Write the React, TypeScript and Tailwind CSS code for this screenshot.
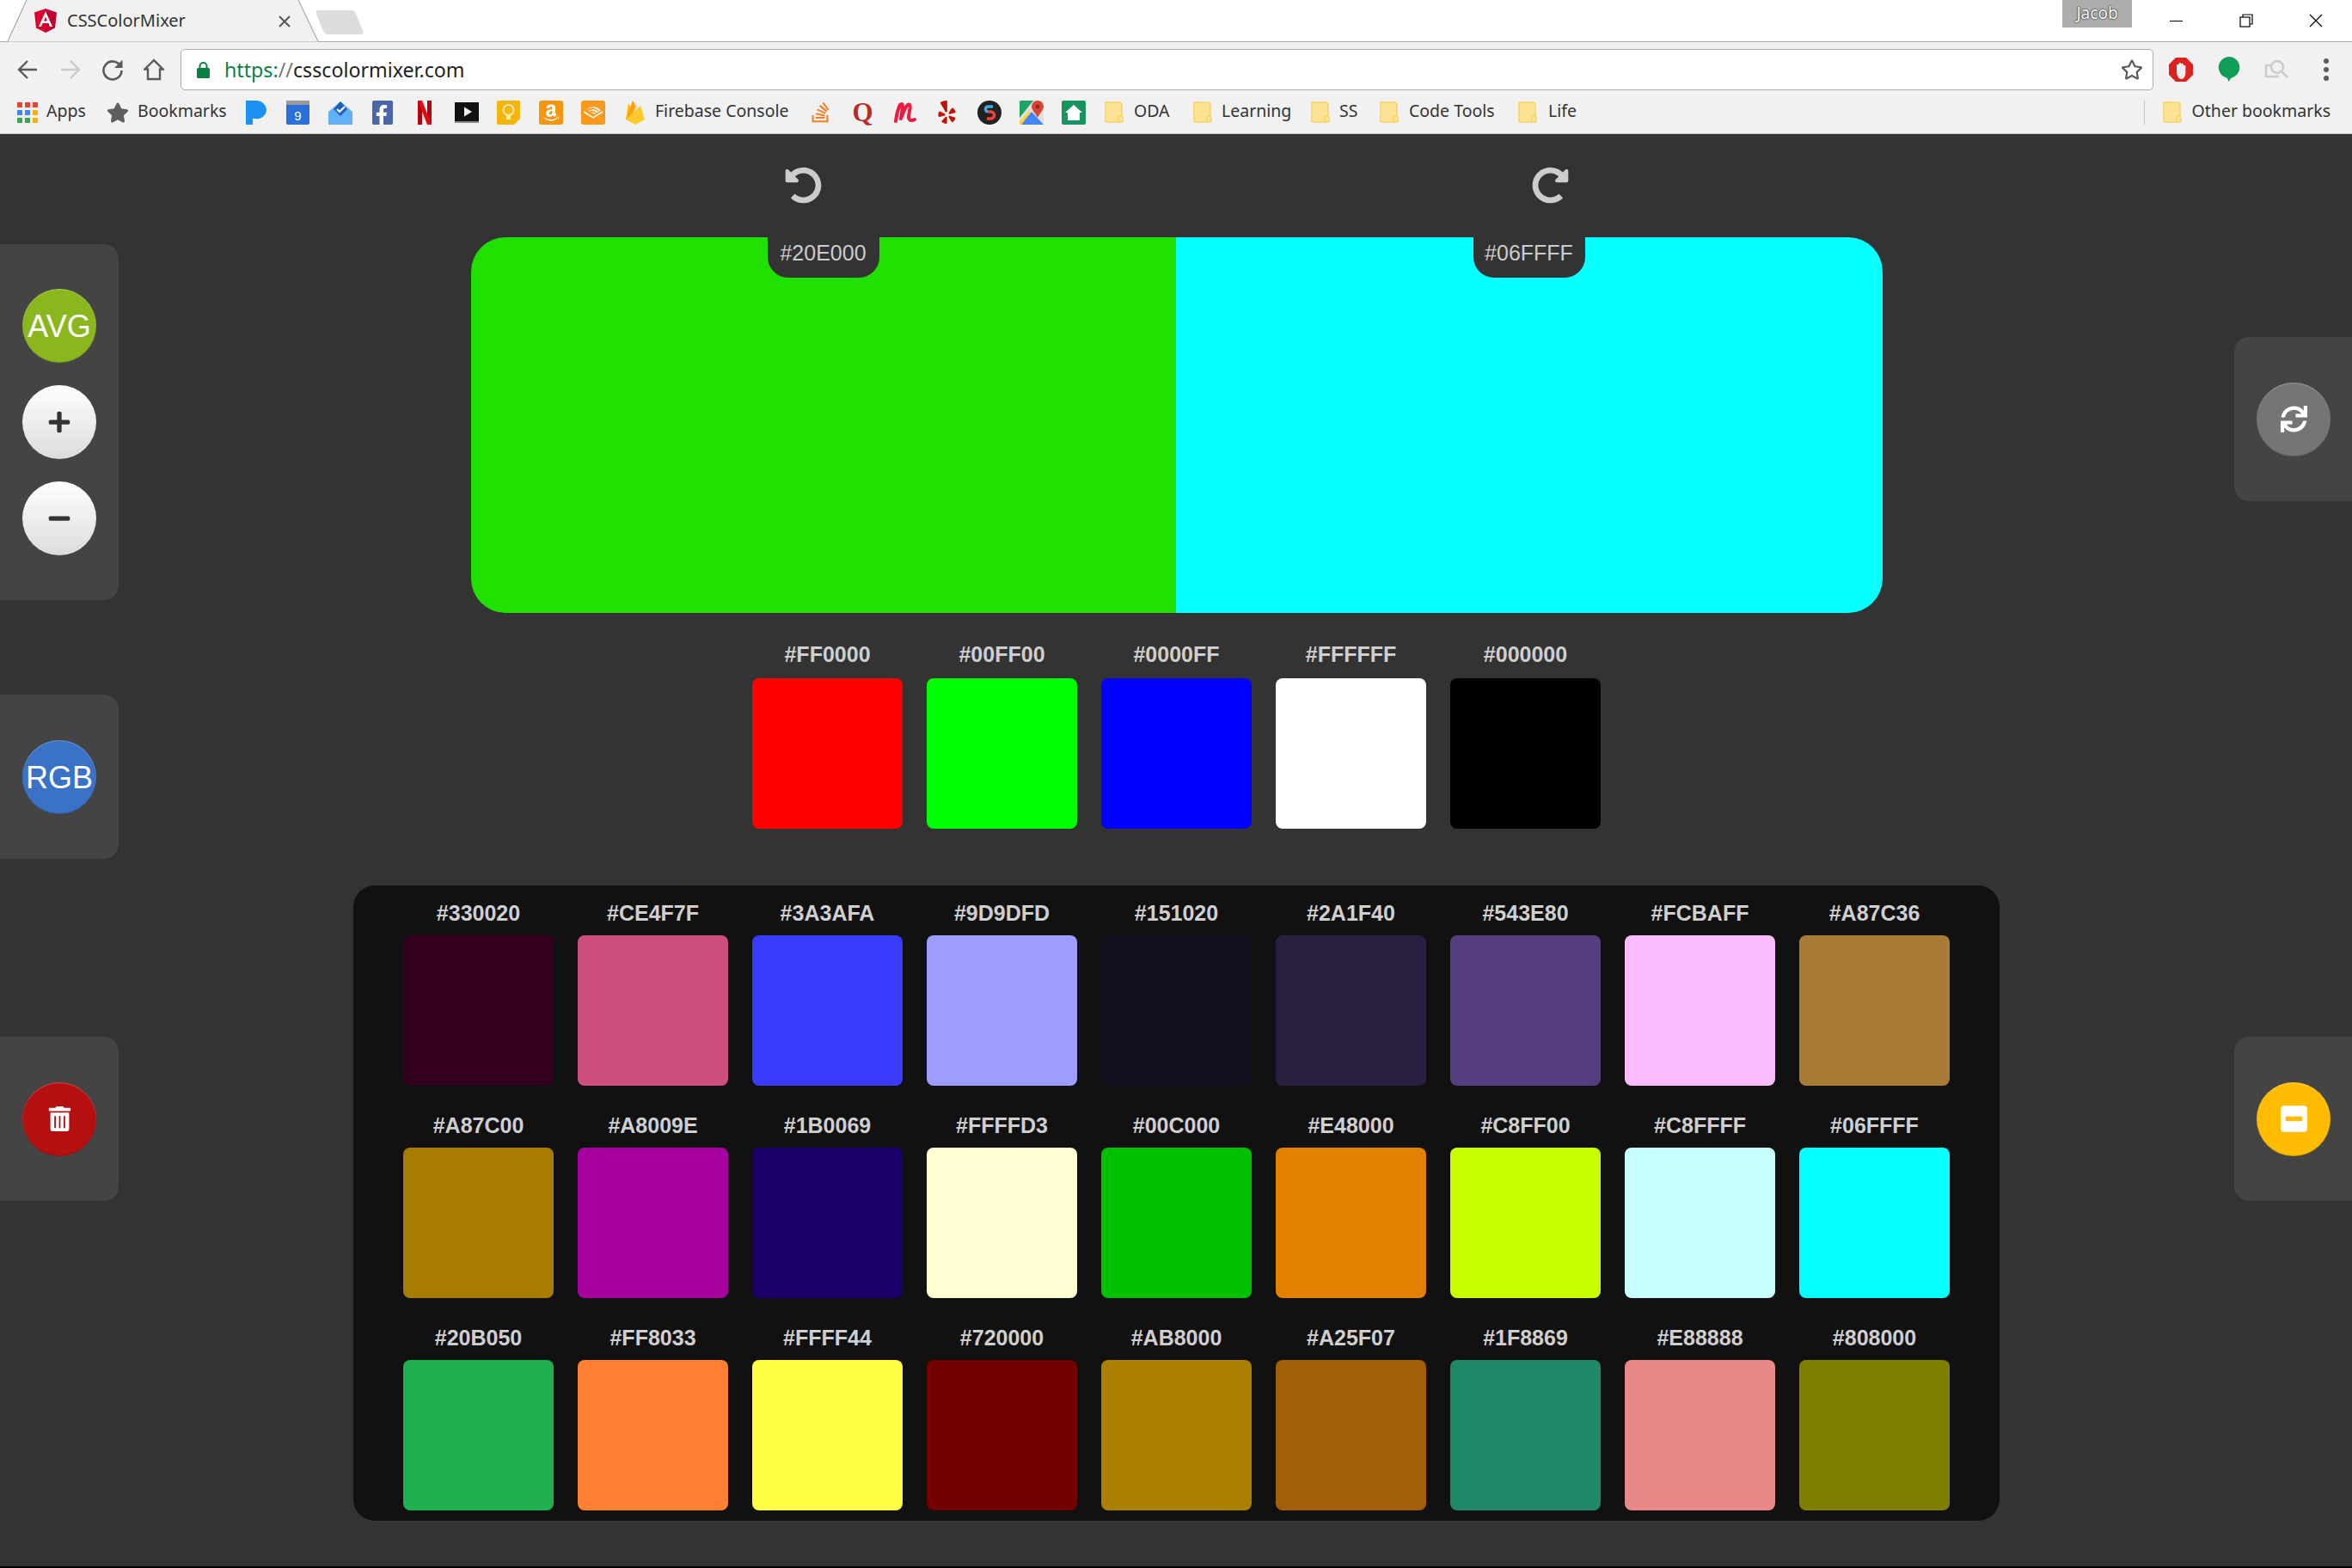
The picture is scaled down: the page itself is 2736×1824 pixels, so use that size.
import React from "react";
import { FaUndoAlt, FaRedoAlt, FaPlus, FaMinus, FaTrashAlt, FaSync, FaMinusSquare, FaYelp, FaStackOverflow, FaFacebookF, FaAmazon, FaStar, FaRegStar } from "react-icons/fa";
import { SiAudible } from "react-icons/si";

const ui = "font-['Noto_Sans','Open_Sans',sans-serif]";
const app = "font-['Liberation_Sans',Arial,sans-serif]";

const presets = [
  ["#FF0000", "bg-[#ff0000]"],
  ["#00FF00", "bg-[#00ff00]"],
  ["#0000FF", "bg-[#0000ff]"],
  ["#FFFFFF", "bg-[#ffffff]"],
  ["#000000", "bg-[#000000]"],
];

const palette = [
  ["#330020", "bg-[#330020]"],
  ["#CE4F7F", "bg-[#ce4f7f]"],
  ["#3A3AFA", "bg-[#3a3afa]"],
  ["#9D9DFD", "bg-[#9d9dfd]"],
  ["#151020", "bg-[#151020]"],
  ["#2A1F40", "bg-[#2a1f40]"],
  ["#543E80", "bg-[#543e80]"],
  ["#FCBAFF", "bg-[#fcbaff]"],
  ["#A87C36", "bg-[#a87c36]"],
  ["#A87C00", "bg-[#a87c00]"],
  ["#A8009E", "bg-[#a8009e]"],
  ["#1B0069", "bg-[#1b0069]"],
  ["#FFFFD3", "bg-[#ffffd3]"],
  ["#00C000", "bg-[#00c000]"],
  ["#E48000", "bg-[#e48000]"],
  ["#C8FF00", "bg-[#c8ff00]"],
  ["#C8FFFF", "bg-[#c8ffff]"],
  ["#06FFFF", "bg-[#06ffff]"],
  ["#20B050", "bg-[#20b050]"],
  ["#FF8033", "bg-[#ff8033]"],
  ["#FFFF44", "bg-[#ffff44]"],
  ["#720000", "bg-[#720000]"],
  ["#AB8000", "bg-[#ab8000]"],
  ["#A25F07", "bg-[#a25f07]"],
  ["#1F8869", "bg-[#1f8869]"],
  ["#E88888", "bg-[#e88888]"],
  ["#808000", "bg-[#808000]"],
];

function Swatch({ label, color, labelGap }: { label: string; color: string; labelGap: string }) {
  return (
    <div className="flex flex-col items-center w-[175px]">
      <div className={`h-[28px] leading-[28px] text-[25px] font-bold text-[#cfcfcf] ${labelGap}`}>{label}</div>
      <div className={`w-[175px] h-[175px] rounded-[8px] ${color}`} />
    </div>
  );
}

function RoundButton({ className, children }: { className: string; children?: React.ReactNode }) {
  return (
    <div className={`w-[86px] h-[86px] shrink-0 rounded-full flex items-center justify-center ${className}`}>
      {children}
    </div>
  );
}

const flat = "shadow-[inset_0_1px_1px_rgba(255,255,255,0.25),inset_0_-1px_1px_rgba(0,0,0,0.15)]";

function Slot({ children }: { children: React.ReactNode }) {
  return <div className="w-[49px] h-[28px] shrink-0 flex items-center justify-center">{children}</div>;
}

function Folder() {
  return (
    <svg width="22" height="25" viewBox="0 0 22 25" className="shrink-0">
      <path d="M1 1h16q3 0 3 3v19q0 1-1 1H2q-1 0-1-1z" fill="#fde293" stroke="#f5d469" strokeWidth="1.5" />
      <rect x="16" y="17" width="5" height="7" rx="1" fill="#fde293" stroke="#f5d469" strokeWidth="1.5" />
    </svg>
  );
}

function BookmarkLabel({ children, className = "" }: { children: React.ReactNode; className?: string }) {
  return <span className={`text-[19.5px] leading-[28px] pb-[3px] text-[#333] whitespace-nowrap ${className}`}>{children}</span>;
}

const appsDots = [
  "bg-[#ea4335]", "bg-[#ea4335]", "bg-[#ea4335]",
  "bg-[#4285f4]", "bg-[#4285f4]", "bg-[#fbac05]",
  "bg-[#34a853]", "bg-[#34a853]", "bg-[#fbac05]",
];

function TabStrip() {
  return (
    <div className={`relative h-[49px] shrink-0 bg-white border-b border-[#a9a9a9] flex items-start ${ui}`}>
      <svg width="372" height="49" viewBox="0 0 372 49" className="absolute left-0 top-0">
        <path d="M9 48.5 L31 0 H347 L370 48.5 Z" fill="#f1f1f1" />
        <path d="M9 48 L31 0 M347 0 L370 48" stroke="#a9a9a9" strokeWidth="1.2" fill="none" />
      </svg>
      <div className="relative flex items-center h-[48px] pl-[40px] w-[366px]">
        <svg width="26" height="28" viewBox="0 0 26 28" className="shrink-0">
          <path d="M13 0 0 4.6 2 22.6 13 28z" fill="#dd0031" />
          <path d="M13 0 26 4.6 24 22.6 13 28z" fill="#c3002f" />
          <path d="M13 3.2 5 21h3l1.6-4h6.8l1.6 4h3zM11 14.4 13 9.6l2 4.8z" fill="#fff" />
        </svg>
        <span className="ml-[12px] text-[20px] leading-[28px] text-[#333] whitespace-nowrap">CSSColorMixer</span>
        <svg width="14" height="14" viewBox="0 0 14 14" className="absolute left-[324px] top-[18px]">
          <path d="M1 1 13 13M13 1 1 13" stroke="#555" strokeWidth="2" />
        </svg>
      </div>
      <div className="relative w-[46px] h-[28px] mt-[12px] ml-[6px] bg-[#dcdcdc] rounded-[4px] skew-x-[22deg]" />
      <div className="ml-auto flex items-start pr-[2px]">
        <div className="w-[81px] h-[32px] mr-[11px] pb-[2px] bg-[#adadad] flex items-center justify-center text-[19px] text-white [text-shadow:0_0_2px_#111,0_0_1px_#111]">
          Jacob
        </div>
        <div className="w-[81px] h-[48px] flex items-center justify-center">
          <div className="w-[15px] h-px bg-black" />
        </div>
        <div className="w-[81px] h-[48px] flex items-center justify-center">
          <svg width="16" height="16" viewBox="0 0 16 16" fill="none" stroke="#000" strokeWidth="1.2">
            <rect x="1" y="4" width="11" height="11" fill="#fff" />
            <path d="M4 4V1h11v11h-3" />
          </svg>
        </div>
        <div className="w-[81px] h-[48px] flex items-center justify-center">
          <svg width="16" height="16" viewBox="0 0 16 16" stroke="#000" strokeWidth="1.2">
            <path d="M1 1 15 15M15 1 1 15" />
          </svg>
        </div>
      </div>
    </div>
  );
}

function Toolbar() {
  return (
    <div className={`h-[57px] shrink-0 bg-[#f1f1f1] flex items-center pt-[7px] ${ui}`}>
      <div className="w-[210px] shrink-0 relative flex items-center pl-[20px] h-full">
        <svg width="24" height="24" viewBox="0 0 24 24" fill="none" stroke="#5a5a5a" strokeWidth="2.4" className="shrink-0">
          <path d="M23 12H3M12 2 2 12l10 10" />
        </svg>
        <svg width="24" height="24" viewBox="0 0 24 24" fill="none" stroke="#c9c9c9" strokeWidth="2.4" className="shrink-0 ml-[26px]">
          <path d="M1 12h20M12 2l10 10-10 10" />
        </svg>
        <svg width="26" height="26" viewBox="0 0 26 26" fill="none" stroke="#5a5a5a" strokeWidth="2.6" className="shrink-0 ml-[24px]">
          <path d="M22 8.5A10.5 10.5 0 1 0 23.5 14" />
          <path d="M24.5 1.5v9.5H15z" fill="#5a5a5a" stroke="none" />
        </svg>
        <svg width="24" height="26" viewBox="0 0 24 26" fill="none" stroke="#5a5a5a" strokeWidth="2.4" className="shrink-0 ml-[23px]">
          <path d="M12 2 1.5 12.5H5V24h14V12.5h3.5z" />
        </svg>
      </div>
      <div className="w-[2295px] h-[48px] shrink-0 bg-white border border-[#adadad] rounded-[5px] flex items-center pl-[18px] pr-[11px]">
        <svg width="15" height="19" viewBox="0 0 15 19" className="shrink-0">
          <rect x="0" y="7" width="15" height="12" rx="1.5" fill="#0b8043" />
          <path d="M3.5 8V5a4 4 0 0 1 8 0v3" fill="none" stroke="#0b8043" strokeWidth="2" />
        </svg>
        <span className="ml-[17px] text-[23.2px] leading-[32px] whitespace-nowrap text-[#222]">
          <span className="text-[#0b8043]">https:</span>
          <span className="text-[#777]">//</span>csscolormixer.com
        </span>
        <FaRegStar className="ml-auto shrink-0 text-[#5a5a5a] text-[26px]" />
      </div>
      <div className="flex-1 relative flex items-center h-full">
        <svg width="28" height="28" viewBox="0 0 28 28" className="shrink-0 ml-[18px]">
          <path d="M8 0h12l8 8v12l-8 8H8l-8-8V8z" fill="#e0201e" />
          <path d="M9 18V9a1.3 1.3 0 0 1 2.6 0V7a1.3 1.3 0 0 1 2.6 0v1a1.3 1.3 0 0 1 2.6 0v2a1.3 1.3 0 0 1 2.6 0v8c0 4-2.5 7-5.2 7S10 22 9 18z" fill="#eee" />
        </svg>
        <svg width="26" height="30" viewBox="0 0 26 30" className="shrink-0 ml-[29px]">
          <path d="M13 0a12.5 12.5 0 0 1 2.5 24.7L12.5 29 11 24.8A12.5 12.5 0 0 1 13 0z" fill="#0f9d58" />
        </svg>
        <svg width="28" height="24" viewBox="0 0 28 24" fill="none" stroke="#cbcbcb" strokeWidth="2.6" className="shrink-0 ml-[28px]">
          <circle cx="15" cy="9" r="7" />
          <path d="m20 14 7 7M8 7H2v13h15" />
        </svg>
        <div className="flex flex-col gap-[4px] ml-[41px]">
          <div className="w-[6px] h-[6px] rounded-full bg-[#5a5a5a]" />
          <div className="w-[6px] h-[6px] rounded-full bg-[#5a5a5a]" />
          <div className="w-[6px] h-[6px] rounded-full bg-[#5a5a5a]" />
        </div>
      </div>
    </div>
  );
}

function BookmarksBar() {
  return (
    <div className={`h-[50px] shrink-0 bg-[#f1f1f1] border-b border-[#c4c4c4] flex items-center pl-[20px] ${ui}`}>
      <div className="grid grid-cols-3 gap-[3px] w-[24px] shrink-0">
        {appsDots.map((c, i) => (
          <div key={i} className={`w-[6px] h-[6px] ${c}`} />
        ))}
      </div>
      <BookmarkLabel className="ml-[10px] w-[70px]">Apps</BookmarkLabel>
      <FaStar className="shrink-0 text-[#5f5f5f] text-[26px]" />
      <BookmarkLabel className="ml-[10px] w-[113px]">Bookmarks</BookmarkLabel>
      <Slot>
        <svg width="24" height="28" viewBox="0 0 24 28">
          <path d="M0 0h11a12 12 0 0 1 13 11 11 11 0 0 1-13 10H8v7H0z" fill="#1c92f2" />
        </svg>
      </Slot>
      <Slot>
        <svg width="27" height="28" viewBox="0 0 27 28">
          <rect y="3" width="27" height="25" rx="2" fill="#2a6fdb" />
          <rect width="27" height="5" rx="1" fill="#9a9a9a" />
          <text x="13.5" y="23" textAnchor="middle" fontSize="15" fill="#fff" fontFamily="Liberation Sans">9</text>
        </svg>
      </Slot>
      <Slot>
        <svg width="28" height="28" viewBox="0 0 28 28">
          <path d="M0 13 14 1l14 12v15H0z" fill="#62b0f5" />
          <path d="M6 10 14 1l8 9-8 8z" fill="#1e5fc4" />
          <path d="m10 10 3 3 6-6" fill="none" stroke="#fff" strokeWidth="2.2" />
          <path d="m0 13 14 9 14-9v15H0z" fill="#62b0f5" />
        </svg>
      </Slot>
      <Slot>
        <div className="w-[24px] h-[28px] rounded-[2px] bg-[#4a66a8] flex items-end justify-end overflow-hidden pr-[2px]">
          <FaFacebookF className="text-white text-[23px]" />
        </div>
      </Slot>
      <Slot>
        <svg width="16" height="28" viewBox="0 0 16 28">
          <path d="M0 0h5v28l-5 0z" fill="#b1060f" />
          <path d="M11 0h5v28h-5z" fill="#b1060f" />
          <path d="M0 0h5l11 28h-5z" fill="#e50914" />
        </svg>
      </Slot>
      <Slot>
        <svg width="28" height="24" viewBox="0 0 28 24">
          <rect width="28" height="22" fill="#111" />
          <rect y="22" width="28" height="2" fill="#888" />
          <path d="M11 5.5 20 11l-9 5.5z" fill="#eee" />
        </svg>
      </Slot>
      <Slot>
        <svg width="27" height="28" viewBox="0 0 27 28">
          <path d="M2 0h25v21l-7 7H2a2 2 0 0 1-2-2V2a2 2 0 0 1 2-2z" fill="#f5b50f" />
          <circle cx="13.5" cy="11" r="6" fill="none" stroke="#fde9a8" strokeWidth="2" />
          <rect x="11" y="17" width="5" height="5" fill="#fde9a8" />
        </svg>
      </Slot>
      <Slot>
        <div className="w-[28px] h-[28px] rounded-[3px] bg-[#f6960e] flex items-center justify-center">
          <FaAmazon className="text-white text-[22px]" />
        </div>
      </Slot>
      <Slot>
        <div className="w-[28px] h-[28px] rounded-[3px] bg-[#f8991c] flex items-center justify-center">
          <SiAudible className="text-white text-[22px]" />
        </div>
      </Slot>
      <Slot>
        <svg width="22" height="28" viewBox="0 0 22 28">
          <path d="M0 22 3 3l5 9z" fill="#ffc107" />
          <path d="M0 22 8 0l4 7-8 15z" fill="#ffa000" />
          <path d="M0 22 17 6l5 16-11 6z" fill="#ffca28" />
        </svg>
      </Slot>
      <BookmarkLabel className="w-[168px] ml-[-1px]">Firebase Console</BookmarkLabel>
      <Slot>
        <FaStackOverflow className="text-[#f48024] text-[27px]" />
      </Slot>
      <Slot>
        <span className="font-['Liberation_Serif',serif] font-bold text-[31px] leading-[28px] text-[#b92b27]">Q</span>
      </Slot>
      <Slot>
        <svg width="28" height="26" viewBox="0 0 28 26" fill="none" stroke="#ed1c40" strokeWidth="4" strokeLinecap="round" strokeLinejoin="round">
          <path d="M3 23C4 15 6 8 8 4c2-2 3-1 3 2L9 20c3-8 5-14 8-16 2-1 3 0 2.500 4L18 17c-.5 5 3 6 7 4" />
        </svg>
      </Slot>
      <Slot>
        <FaYelp className="text-[#c41200] text-[27px]" />
      </Slot>
      <Slot>
        <svg width="28" height="28" viewBox="0 0 28 28">
          <circle cx="14" cy="14" r="14" fill="#222" />
          <path d="M18 7h-5a3 3 0 0 0-1 6" fill="none" stroke="#44a8e0" strokeWidth="3.5" />
          <path d="M11 21h4a4 4 0 0 0 1-8h-4" fill="none" stroke="#ef4136" strokeWidth="3.5" />
        </svg>
      </Slot>
      <Slot>
        <svg width="28" height="28" viewBox="0 0 28 28">
          <rect width="28" height="28" rx="2" fill="#e0e0e0" />
          <path d="M0 28V2q0-2 2-2h14L0 20z" fill="#1da462" />
          <path d="M0 28 14 13l14 15z" fill="#4285f4" />
          <path d="M0 24 11 12l2 2L2 28H0z" fill="#ffd43c" />
          <path d="M21 0a7 7 0 0 1 7 7c0 4-5 8-7 13-2-5-7-9-7-13a7 7 0 0 1 7-7z" fill="#db4437" />
          <circle cx="21" cy="7" r="2.5" fill="#8e2a20" />
        </svg>
      </Slot>
      <Slot>
        <svg width="28" height="28" viewBox="0 0 28 28">
          <rect width="28" height="28" rx="2" fill="#16955f" />
          <path d="M14 5 4 14h3v9h14v-9h3z" fill="#fff" />
        </svg>
      </Slot>
      <div className="ml-[12px] flex items-center">
        <Folder />
      </div>
      <BookmarkLabel className="ml-[12px] w-[69px]">ODA</BookmarkLabel>
      <Folder />
      <BookmarkLabel className="ml-[11px] w-[104px]">Learning</BookmarkLabel>
      <Folder />
      <BookmarkLabel className="ml-[11px] w-[47px]">SS</BookmarkLabel>
      <Folder />
      <BookmarkLabel className="ml-[12px] w-[127px]">Code Tools</BookmarkLabel>
      <Folder />
      <BookmarkLabel className="ml-[13px]">Life</BookmarkLabel>
      <div className="ml-auto flex items-center pr-[25px]">
        <div className="w-px h-[28px] bg-[#c4c4c4] mr-[21px]" />
        <Folder />
        <BookmarkLabel className="ml-[12px]">Other bookmarks</BookmarkLabel>
      </div>
    </div>
  );
}

export default function App() {
  return (
    <div className={`w-[2736px] h-[1824px] flex flex-col bg-[#333333] overflow-hidden ${app}`}>
      <TabStrip />
      <Toolbar />
      <BookmarksBar />

      <div className="flex-1 flex min-h-0">
        <div className="w-[138px] shrink-0 pt-[128px] flex flex-col">
          <div className="h-[414px] bg-[#444444] rounded-r-[17px] flex flex-col gap-[26px] justify-center pl-[26px]">
            <RoundButton className={`bg-[#8ab71e] ${flat} text-white text-[36px] pt-[2px]`}>AVG</RoundButton>
            <RoundButton className="bg-gradient-to-b from-white to-[#dcdcdc]">
              <FaPlus className="text-[#333] text-[28px]" />
            </RoundButton>
            <RoundButton className="bg-gradient-to-b from-white to-[#dcdcdc]">
              <FaMinus className="text-[#333] text-[28px]" />
            </RoundButton>
          </div>
          <div className="h-[191px] mt-[110px] bg-[#444444] rounded-r-[17px] flex items-center pl-[26px]">
            <RoundButton className={`bg-[#3a72c7] ${flat} text-white text-[36px] pt-[2px]`}>RGB</RoundButton>
          </div>
          <div className="h-[191px] mt-[207px] bg-[#444444] rounded-r-[17px] flex items-center pl-[26px]">
            <RoundButton className={`bg-[#b51010] ${flat}`}>
              <FaTrashAlt className="text-white text-[29px]" />
            </RoundButton>
          </div>
        </div>

        <div className="flex-1 min-w-0 flex flex-col items-center pt-[38px]">
          <div className="w-[1640px] flex justify-between px-[364px] h-[82px] items-start">
            <FaUndoAlt className="text-[#cccccc] text-[43px]" />
            <FaRedoAlt className="text-[#cccccc] text-[43px]" />
          </div>
          <div className="w-[1642px] h-[437px] rounded-[40px] overflow-hidden flex">
            <div className="w-[820px] shrink-0 bg-[#20e000] flex justify-center">
              <div className="w-[130px] h-[47px] pb-[10px] bg-[#333333] rounded-b-[24px] flex items-center justify-center text-[25px] text-[#cccccc]">#20E000</div>
            </div>
            <div className="flex-1 bg-[#06ffff] flex justify-center">
              <div className="w-[130px] h-[47px] pb-[10px] bg-[#333333] rounded-b-[24px] flex items-center justify-center text-[25px] text-[#cccccc]">#06FFFF</div>
            </div>
          </div>
          <div className="mt-[34px] flex gap-[28px]">
            {presets.map(([l, c]) => (
              <Swatch key={l} label={l} color={c} labelGap="mb-[14px]" />
            ))}
          </div>
          <div className="mt-[66px] w-[1915px] bg-[#111111] rounded-[25px] pt-[18px] pb-[12px] px-[58px] grid grid-cols-9 gap-x-[28px] gap-y-[32px]">
            {palette.map(([l, c]) => (
              <Swatch key={l} label={l} color={c} labelGap="mb-[12px]" />
            ))}
          </div>
        </div>

        <div className="w-[137px] shrink-0 pt-[236px] flex flex-col">
          <div className="h-[191px] bg-[#444444] rounded-l-[17px] flex items-center pl-[26px]">
            <RoundButton className={`bg-[#757575] ${flat}`}>
              <FaSync className="text-white text-[31px]" />
            </RoundButton>
          </div>
          <div className="h-[191px] mt-[623px] bg-[#444444] rounded-l-[17px] flex items-center pl-[26px]">
            <RoundButton className={`bg-[#ffbc00] ${flat}`}>
              <FaMinusSquare className="text-white text-[35px]" />
            </RoundButton>
          </div>
        </div>
      </div>
      <div className="h-[2px] shrink-0 bg-black" />
    </div>
  );
}
